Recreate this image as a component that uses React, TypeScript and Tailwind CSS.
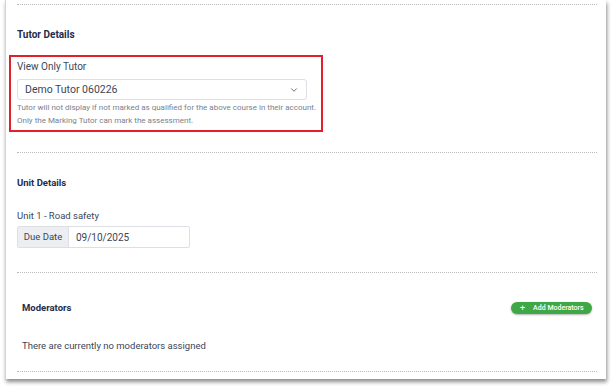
import { ChevronDown } from "lucide-react";

const Dotted = ({ className = "" }: { className?: string }) => (
  <div className={`border-t border-dotted border-[#b9b9b9] ${className}`} />
);

export default function App() {
  return (
    <div className="w-[613px] h-[388px] bg-white overflow-hidden font-['Roboto',sans-serif]">
      <div className="ml-[5px] w-[601px] h-[379px] bg-white border-l border-[#d4d4d4] shadow-[1px_3px_4px_rgba(0,0,0,0.45)] pl-[11px] pr-[9px] pt-[4px]">
        <Dotted />

        {/* Tutor details */}
        <h3 className="mt-[24px] text-[10px] leading-[12px] font-bold text-[#1e2c4c]">
          Tutor Details
        </h3>
        <div className="mt-[14px] -ml-[8px] w-[314px] border-2 border-[#e0212b] pl-[6px] pt-[4px] pb-[3px]">
          <div className="text-[10px] leading-[12px] text-[#3b4658]">View Only Tutor</div>
          <div className="mt-[6px] w-[290px] h-[21px] border border-[#dcdfe3] rounded-[3px] flex items-center justify-between pl-[7px] pr-[7px]">
            <span className="text-[10.5px] text-[#3b4658]">Demo Tutor 060226</span>
            <ChevronDown className="w-[10px] h-[10px] text-[#555]" strokeWidth={2} />
          </div>
          <div className="mt-[1px] text-[8px] leading-[13px] text-[#7a828d]">
            <p>Tutor will not display if not marked as qualified for the above course in their account.</p>
            <p>Only the Marking Tutor can mark the assessment.</p>
          </div>
        </div>

        <Dotted className="mt-[20px]" />

        {/* Unit details */}
        <h3 className="mt-[24px] text-[9.5px] leading-[12px] font-bold text-[#1e2c4c]">
          Unit Details
        </h3>
        <div className="mt-[21px] text-[9.5px] leading-[12px] text-[#3b4658]">Unit 1 - Road safety</div>
        <div className="mt-[4px] w-[173px] h-[22px] flex border border-[#dcdfe3] rounded-[2px] overflow-hidden">
          <div className="w-[51px] bg-[#eceef1] border-r border-[#dcdfe3] flex items-center justify-center text-[9.5px] text-[#3b4658]">
            Due Date
          </div>
          <div className="flex-1 flex items-center pl-[7px] text-[10px] text-[#3b4658]">09/10/2025</div>
        </div>

        <Dotted className="mt-[24px]" />

        {/* Moderators */}
        <div className="mt-[29px] px-[5px] flex items-center justify-between h-[12px]">
          <h3 className="text-[9.5px] leading-[12px] font-bold text-[#1e2c4c]">Moderators</h3>
          <button className="w-[81px] h-[12px] rounded-full bg-[#3fa846] shadow-[0_1px_2px_rgba(0,0,0,0.3)] flex items-center pl-[9px] gap-[8px] text-white">
            <span className="text-[9px] leading-none">+</span>
            <span className="text-[7px] leading-none font-medium">Add Moderators</span>
          </button>
        </div>
        <div className="mt-[26px] pl-[5px] text-[9.5px] leading-[12px] text-[#3b4658]">
          There are currently no moderators assigned
        </div>

        <Dotted className="mt-[19px]" />
      </div>
    </div>
  );
}
